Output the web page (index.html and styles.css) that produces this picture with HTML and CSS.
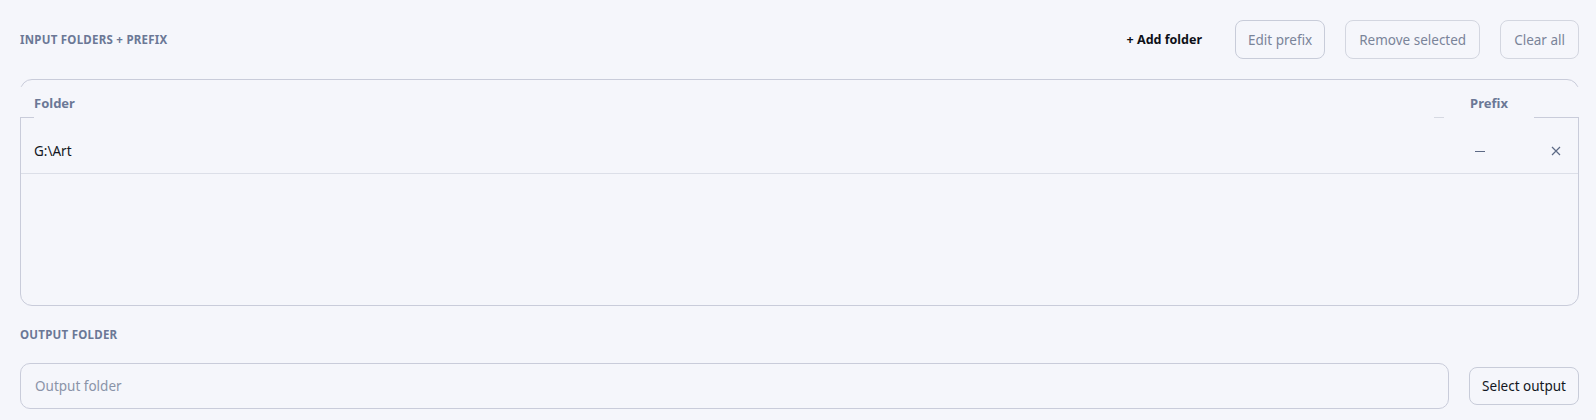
FILE: index.html
```html
<!DOCTYPE html>
<html>
<head>
<meta charset="utf-8">
<link rel="stylesheet" href="styles.css">
</head>
<body>
<div class="page">
  <div class="toolbar">
    <div class="label">INPUT FOLDERS + PREFIX</div>
    <div class="actions">
      <button class="btn btn-text">+ Add folder</button>
      <button class="btn btn-muted btn-edit">Edit prefix</button>
      <button class="btn btn-muted">Remove selected</button>
      <button class="btn btn-muted">Clear all</button>
    </div>
  </div>
  <div class="table">
    <div class="thead">
      <div class="th-edge"></div>
      <div class="th th-folder">Folder</div>
      <div class="th-gap"></div>
      <div class="th th-prefix">Prefix</div>
      <div class="th-end"></div>
    </div>
    <div class="row">
      <div class="cell cell-folder">G:\Art</div>
      <div class="cell cell-prefix"><span class="dash"></span></div>
      <div class="cell cell-x">
        <svg width="10" height="10" viewBox="0 0 10 10"><path d="M1 1 L9 9 M9 1 L1 9" stroke="#5d6a85" stroke-width="1.2" fill="none"/></svg>
      </div>
    </div>
  </div>
  <div class="label label-out">OUTPUT FOLDER</div>
  <div class="output">
    <div class="input">Output folder</div>
    <button class="btn btn-dark">Select output</button>
  </div>
</div>
</body>
</html>
```
FILE: styles.css
```css
* { box-sizing: border-box; }
html, body { margin: 0; padding: 0; background: #f5f6fb; }
body { font-family: "Noto Sans", sans-serif; }
.page { padding: 20px 17px 0 20px; }
.toolbar { display: flex; align-items: center; justify-content: space-between; height: 39px; }
.label { font-size: 11.5px; font-weight: 700; letter-spacing: 0.25px; color: #6b7896; }
.actions { display: flex; gap: 20px; align-items: center; }
.btn { font-family: inherit; font-size: 13.5px; height: 39px; padding: 0 13px; border: 1px solid #c8ccd9; border-radius: 8px; background: #f5f6fb; }
.btn-text { border-color: transparent; font-weight: 700; font-size: 12.5px; color: #0d1018; padding: 0 12px 0 0; }
.btn-muted { color: #7a8499; border-color: #d3d6e0; }
.btn-edit { border-color: #c8ccd9; padding: 0 12px; }
.table { margin-top: 20px; height: 227px; border: 1px solid #c9ccda; border-radius: 12px; }
.thead { display: flex; margin: 7px -1px 0 -1px; height: 31px; background: #f5f6fb; }
.th { font-size: 13px; font-weight: 700; color: #6b7896; display: flex; align-items: center; }
.th-edge { width: 14px; border-bottom: 1px solid #c9ccda; }
.th-folder { flex: 1; }
.th-gap { width: 10px; border-bottom: 1px solid #d6d9e2; }
.th-prefix { width: 90px; justify-content: center; }
.th-end { width: 45px; border-bottom: 1px solid #c9ccda; }
.row { display: flex; height: 56px; padding-top: 10px; border-bottom: 1px solid #dcdfe8; align-items: center; font-size: 13.5px; color: #131722; }
.cell-folder { flex: 1; padding-left: 13px; }
.cell-prefix { width: 100px; padding-left: 41px; display: flex; align-items: center; }
.dash { display: block; width: 10px; height: 1px; background: #5d6a85; margin-top: 1px; }
.cell-x { width: 44px; display: flex; justify-content: center; }
.label-out { margin-top: 21px; line-height: 16px; }
.output { display: flex; align-items: center; gap: 20px; margin-top: 20px; }
.input { flex: 1; height: 46px; border: 1px solid #c9ccda; border-radius: 10px; display: flex; align-items: center; padding-left: 14px; font-size: 13.5px; color: #8a93a8; }
.btn-dark { height: 38px; color: #131722; padding: 0 12px; }
```
